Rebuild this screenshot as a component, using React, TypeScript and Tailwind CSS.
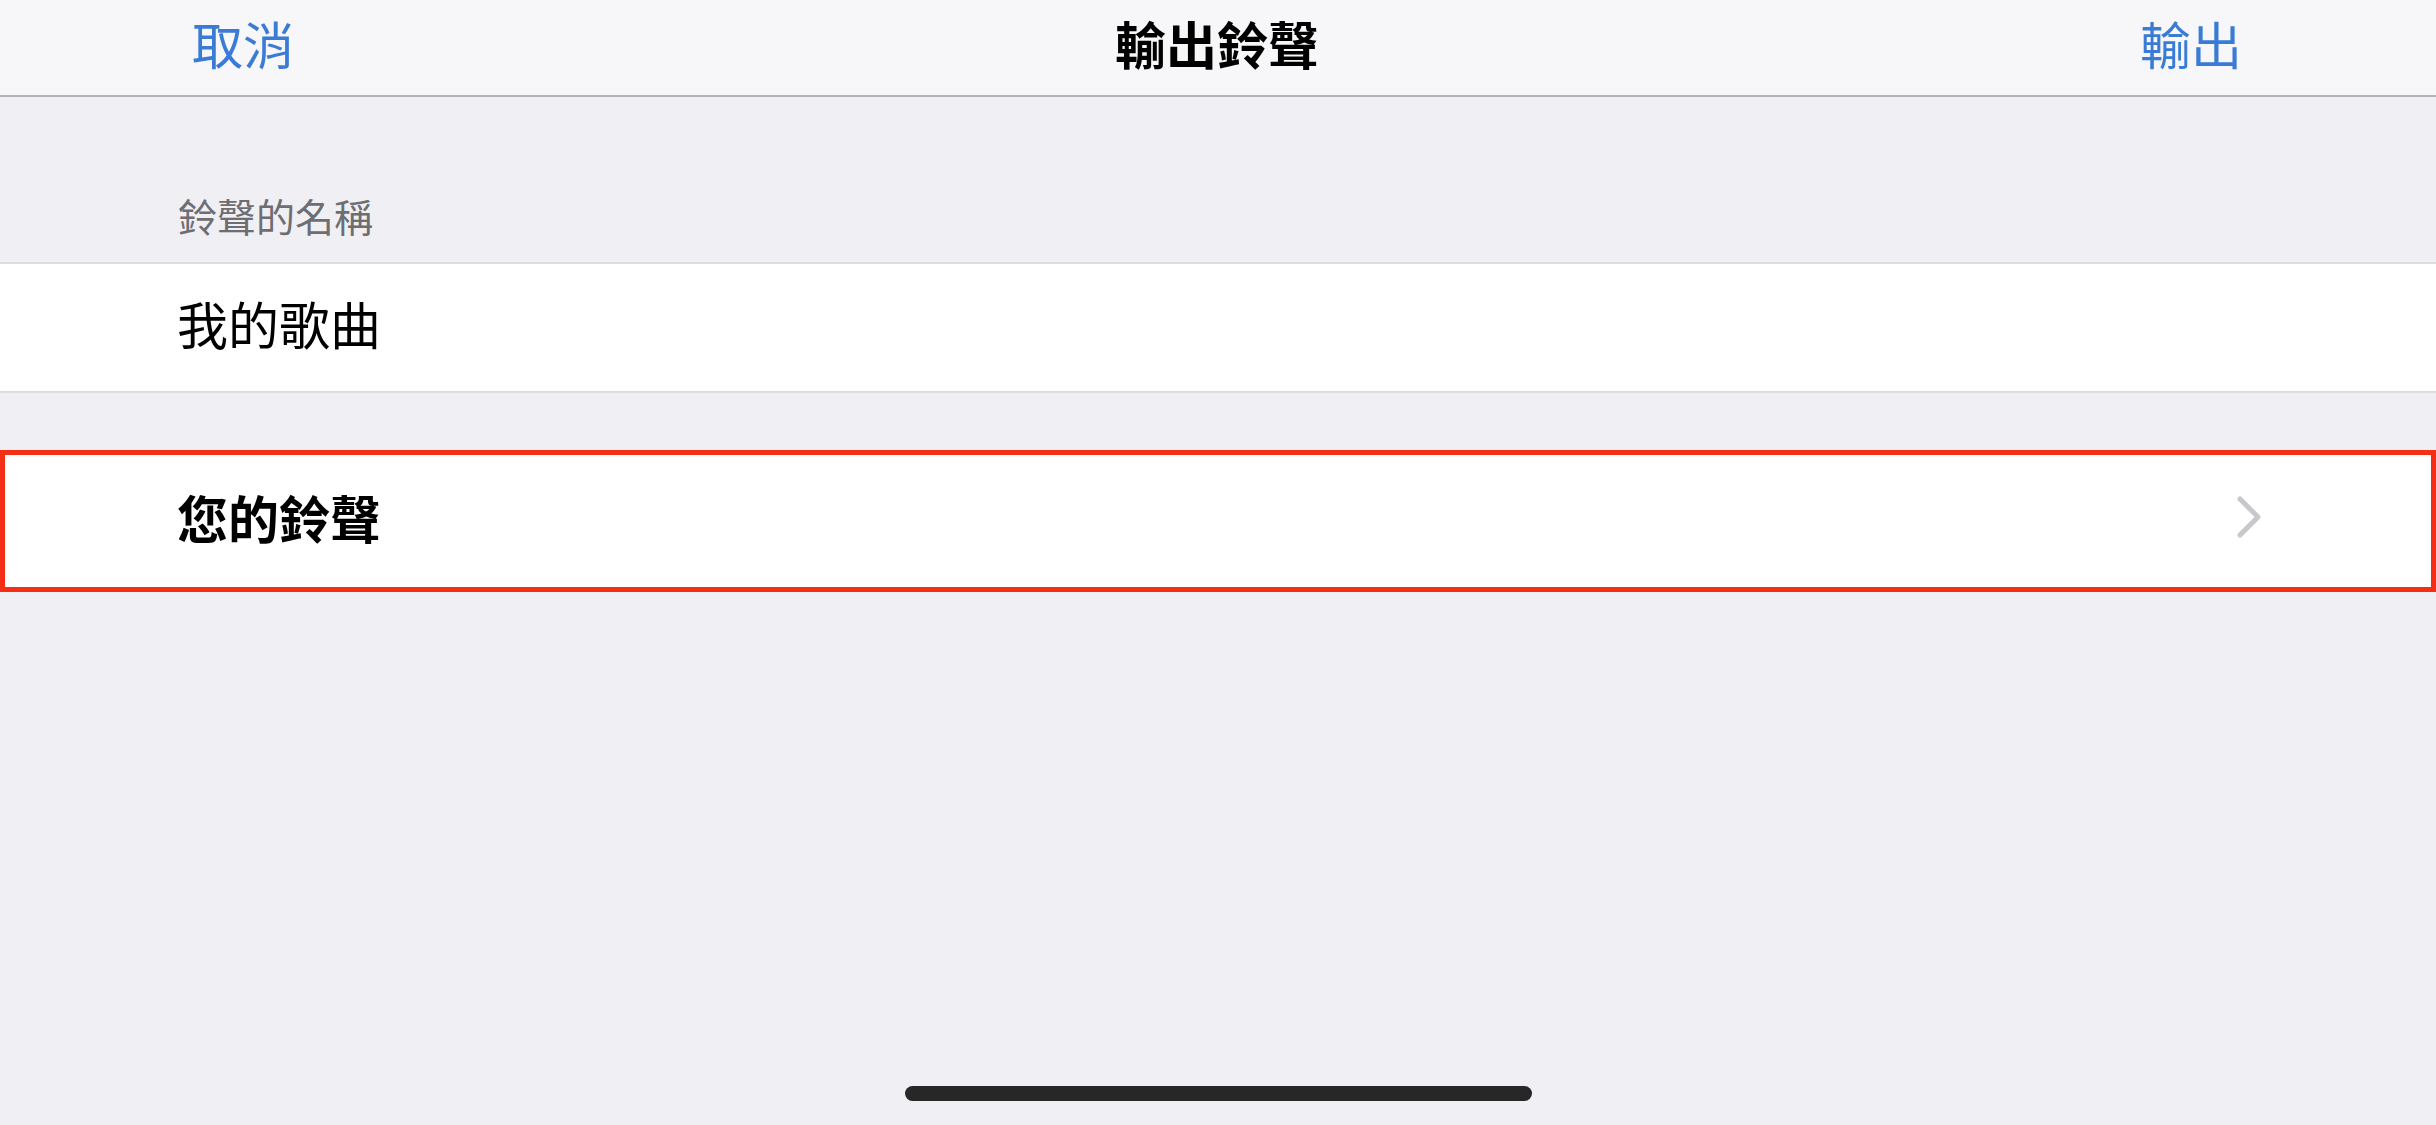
import React from "react";

const font = { fontFamily: '"Noto Sans CJK TC", "Noto Sans", sans-serif' };

export default function App() {
  return (
    <div
      className="w-[2436px] h-[1125px] bg-[#efeff4] flex flex-col overflow-hidden"
      style={font}
    >
      {/* Navigation bar */}
      <div className="h-[97px] bg-[#f7f7f9] border-b-[2px] border-[#b3b3b8] flex items-center justify-between pl-[192px] pr-[194px] pb-[8px] shrink-0">
        <span className="text-[51px] leading-[51px] text-[#3a7bd5]">取消</span>
        <span className="text-[51px] leading-[51px] font-semibold text-black">輸出鈴聲</span>
        <span className="text-[51px] leading-[51px] text-[#3a7bd5]">輸出</span>
      </div>

      {/* Section header */}
      <div className="h-[165px] flex items-end pb-[27px] pl-[178px] shrink-0">
        <span className="text-[39px] leading-[39px] text-[#6d6d72]">鈴聲的名稱</span>
      </div>

      {/* Name cell */}
      <div className="h-[131px] bg-white border-y-[2px] border-[#dcdce1] flex items-center pl-[177px] pb-[8px] shrink-0">
        <span className="text-[51px] leading-[51px] text-black">我的歌曲</span>
      </div>

      <div className="h-[57px] shrink-0" />

      {/* Highlighted ringtone cell */}
      <div className="h-[142px] bg-white border-[5px] border-[#f52e16] flex items-center justify-between pl-[172px] pr-[169px] pb-[8px] shrink-0">
        <span className="text-[51px] leading-[51px] font-semibold text-black">您的鈴聲</span>
        <svg width="26" height="42" viewBox="0 0 26 42" fill="none">
          <polyline
            points="4,3 22,21 4,39"
            stroke="#c7c7cc"
            strokeWidth="5"
            strokeLinecap="round"
            strokeLinejoin="round"
          />
        </svg>
      </div>

      {/* Home indicator */}
      <div className="mt-auto mb-[24px] flex justify-center">
        <div className="w-[627px] h-[15px] rounded-full bg-[#272727]" />
      </div>
    </div>
  );
}
